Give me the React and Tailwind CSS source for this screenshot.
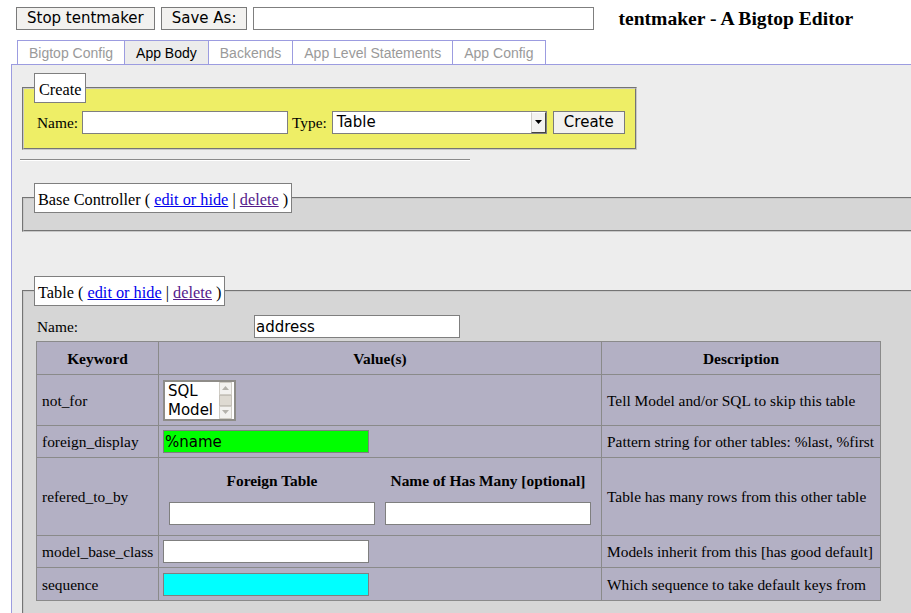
import React from "react";

const sans = "font-['DejaVu_Sans',sans-serif]";

function Btn({ children, className = "" }) {
  return (
    <button
      className={`h-[23px] px-[10px] border border-[#7a7a7a] bg-[#f2f1ef] text-[15px] leading-none text-black ${sans} ${className}`}
    >
      {children}
    </button>
  );
}

function Field({ value = "", className = "" }) {
  return (
    <input
      readOnly
      value={value}
      className={`h-[23px] border border-[#7f7f7f] px-[1px] text-[15px] text-black outline-none ${sans} ${className}`}
    />
  );
}

function Legend({ children }) {
  return (
    <legend className="bg-white border border-[#7f7f7f] px-[3px] pt-[6px] pb-[2px] leading-[20px] text-[16.3px]">
      {children}
    </legend>
  );
}

function Actions() {
  return (
    <>
      {" ( "}
      <a href="#" className="text-[#0000ee] underline">edit or hide</a>
      {" | "}
      <a href="#" className="text-[#551a8b] underline">delete</a>
      {" )"}
    </>
  );
}

function Tab({ label, active, first }) {
  return (
    <div
      className={`h-[24px] px-[11px] leading-[24px] border-t border-r border-[#9c9ce0] ${first ? "border-l" : ""} ${
        active ? "bg-[#ececec] text-black" : "text-[#9a9a9a]"
      }`}
    >
      {label}
    </div>
  );
}

function ListBox() {
  return (
    <div className="flex w-[73px] h-[41px] border-2 border-[#8e8c88] bg-white">
      <div className={`flex-1 pl-[3px] text-[15px] leading-[19px] ${sans}`}>
        <div>SQL</div>
        <div>Model</div>
      </div>
      <div className="w-[13px] mr-[2px] flex flex-col bg-[#e9e7e3]">
        <div className="h-[13px] flex items-center justify-center border border-[#cfccc5] bg-[#f2f1ef]">
          <svg width="7" height="4" viewBox="0 0 7 4">
            <path d="M0 4L3.5 0L7 4z" fill="#b4b2ac" />
          </svg>
        </div>
        <div className="flex-1 border border-[#c4c0b8] bg-[#dedad2]" />
        <div className="h-[13px] flex items-center justify-center border border-[#cfccc5] bg-[#f2f1ef]">
          <svg width="7" height="4" viewBox="0 0 7 4">
            <path d="M0 0L7 0L3.5 4z" fill="#b4b2ac" />
          </svg>
        </div>
      </div>
    </div>
  );
}

const rows = [
  { key: "not_for", h: "h-[51px]", desc: "Tell Model and/or SQL to skip this table" },
  { key: "foreign_display", h: "h-[32px]", desc: "Pattern string for other tables: %last, %first" },
  { key: "refered_to_by", h: "h-[78px]", desc: "Table has many rows from this other table" },
  { key: "model_base_class", h: "h-[32px]", desc: "Models inherit from this [has good default]" },
  { key: "sequence", h: "h-[33px]", desc: "Which sequence to take default keys from" },
];

function ValueCell({ name }) {
  if (name === "not_for") return <ListBox />;
  if (name === "foreign_display")
    return <Field value="%name" className="w-[206px] bg-[#00ff00]" />;
  if (name === "refered_to_by")
    return (
      <div className="flex gap-[10px] pl-[6px] pt-[3px]">
        <div className="flex flex-col items-center w-[206px]">
          <span className="font-bold leading-[20px]">Foreign Table</span>
          <Field className="mt-[11px] w-[206px] bg-white" />
        </div>
        <div className="flex flex-col items-center w-[206px]">
          <span className="font-bold leading-[20px] whitespace-nowrap">Name of Has Many [optional]</span>
          <Field className="mt-[11px] w-[206px] bg-white" />
        </div>
      </div>
    );
  if (name === "sequence") return <Field className="w-[206px] bg-[#00ffff]" />;
  return <Field className="w-[206px] bg-white" />;
}

export default function App() {
  return (
    <div className="w-[911px] h-[613px] overflow-hidden bg-white text-black font-['Liberation_Serif',serif] text-[15.4px]">
      <div className="flex items-center pt-[7px] pl-[16px]">
        <Btn>Stop tentmaker</Btn>
        <Btn className="ml-[6px]">Save As:</Btn>
        <Field className="ml-[6px] w-[341px] bg-white" />
        <h1 className="ml-[24px] text-[19.6px] font-bold leading-[23px]">tentmaker - A Bigtop Editor</h1>
      </div>

      <div className="flex mt-[10px] ml-[17px] font-['Liberation_Sans',sans-serif] text-[14px]">
        <Tab label="Bigtop Config" first />
        <Tab label="App Body" active />
        <Tab label="Backends" />
        <Tab label="App Level Statements" />
        <Tab label="App Config" />
      </div>

      <div className="ml-[11px] w-[1000px] min-h-[560px] border-l border-t border-[#9c9ce0] bg-[#ededed] pl-[8px] pt-[8px]">
        <fieldset className="mx-[2px] w-[615px] border-2 [--tw-border-style:groove] border-[#c8c8c8] bg-[#eeee66] pl-[10px] pr-[10px] pt-[8px] pb-[14px]">
          <legend className="bg-white border border-[#7f7f7f] px-[4px] pt-[6px] pb-[2px] leading-[20px] text-[16.3px]">Create</legend>
          <div className="flex items-center">
            <span className="ml-[3px]">Name:</span>
            <Field className="ml-[4px] w-[206px] bg-white" />
            <span className="ml-[4px]">Type:</span>
            <div className="ml-[5px] flex w-[215px] h-[23px] border border-[#7f7f7f] bg-white">
              <span className={`flex-1 pl-[4px] leading-[21px] text-[15px] ${sans}`}>Table</span>
              <span className="w-[15px] h-full flex items-center justify-center bg-[#f3f2f0] border border-t-white border-l-[#cfcdc8] border-r-[#444] border-b-[#444]">
                <svg width="7" height="6" viewBox="0 0 7 6">
                  <path d="M0 0H7L3.5 4z" fill="#000" />
                </svg>
              </span>
            </div>
            <Btn className="ml-[6px]">Create</Btn>
          </div>
        </fieldset>

        <hr className="mt-[9px] w-[450px] border-t border-[#8a8a8a] border-b border-b-white" />

        <fieldset className="mt-[22px] mx-[2px] w-[980px] border-2 [--tw-border-style:groove] border-[#c8c8c8] bg-[#d6d6d6] pl-[10px] pb-[17px]">
          <Legend>
            Base Controller
            <Actions />
          </Legend>
        </fieldset>

        <fieldset className="mt-[44px] mx-[2px] w-[980px] border-2 [--tw-border-style:groove] border-[#c8c8c8] bg-[#d6d6d6] pl-[10px] pt-[9px] pb-[20px]">
          <Legend>
            Table
            <Actions />
          </Legend>
          <div className="flex items-center">
            <span className="ml-[3px] w-[217px]">Name:</span>
            <Field value="address" className="w-[206px] bg-white" />
          </div>
          <table className="ml-[2px] mt-[3px] w-[844px] table-fixed border-collapse bg-[#b3b0c4]">
            <colgroup>
              <col className="w-[122px]" />
              <col className="w-[443px]" />
              <col className="w-[279px]" />
            </colgroup>
            <thead>
              <tr className="h-[33px]">
                <th className="border border-[#8a8a8a] font-bold">Keyword</th>
                <th className="border border-[#8a8a8a] font-bold">Value(s)</th>
                <th className="border border-[#8a8a8a] font-bold">Description</th>
              </tr>
            </thead>
            <tbody>
              {rows.map((r) => (
                <tr key={r.key} className={r.h}>
                  <td className="border border-[#8a8a8a] px-[5px] align-middle whitespace-nowrap">{r.key}</td>
                  <td className="border border-[#8a8a8a] px-[4px] align-middle">
                    <ValueCell name={r.key} />
                  </td>
                  <td className="border border-[#8a8a8a] px-[5px] align-middle whitespace-nowrap">{r.desc}</td>
                </tr>
              ))}
            </tbody>
          </table>
        </fieldset>
      </div>
    </div>
  );
}
